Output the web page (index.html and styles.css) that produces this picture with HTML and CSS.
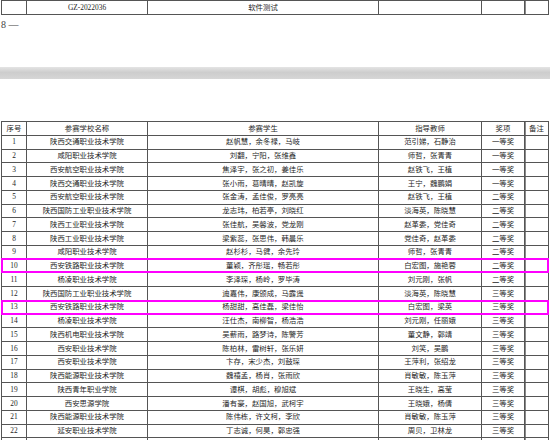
FILE: index.html
```html
<!DOCTYPE html>
<html lang="zh-CN">
<head>
<meta charset="utf-8">
<title>获奖名单</title>
<link rel="stylesheet" href="styles.css">
</head>
<body>
<div class="page page-top">
  <div class="tbl tbl-head">
    <span></span><span>GZ-2022036</span><span>软件测试</span><span></span><span></span><span></span>
  </div>
  <div class="pageno">8 —</div>
</div>
<div class="gap"></div>
<div class="page page-main">
  <div class="wrap">
    <div class="tbl">
      <span>序号</span><span>参赛学校名称</span><span>参赛学生</span><span>指导教师</span><span>奖项</span><span>备注</span>
      <span>1</span><span>陕西交通职业技术学院</span><span>赵帆慧，余冬禄，马岐</span><span>范引娣，石静治</span><span>一等奖</span><span></span>
      <span>2</span><span>咸阳职业技术学院</span><span>刘翻，宁阳，张维鑫</span><span>师哲，张青青</span><span>一等奖</span><span></span>
      <span>3</span><span>西安航空职业技术学院</span><span>焦泽宇，张之初，姜佳乐</span><span>赵铁飞，王植</span><span>一等奖</span><span></span>
      <span>4</span><span>陕西交通职业技术学院</span><span>张小雨，葛晴晴，赵凯旋</span><span>王宁，魏鹏娟</span><span>一等奖</span><span></span>
      <span>5</span><span>西安航空职业技术学院</span><span>张金涛，孟佳俊，罗亮亮</span><span>赵铁飞，王植</span><span>二等奖</span><span></span>
      <span>6</span><span>陕西国防工业职业技术学院</span><span>龙志玮，柏若亭，刘晓红</span><span>淡海英，陈晓慧</span><span>二等奖</span><span></span>
      <span>7</span><span>陕西工业职业技术学院</span><span>张佳航，吴馨波，党龙刚</span><span>赵革委，党佳奇</span><span>二等奖</span><span></span>
      <span>8</span><span>陕西工业职业技术学院</span><span>梁紫蕊，张思伟，韩晨乐</span><span>党佳奇，赵革委</span><span>二等奖</span><span></span>
      <span>9</span><span>咸阳职业技术学院</span><span>赵杉杉，马健，余先玲</span><span>师哲，张青青</span><span>二等奖</span><span></span>
      <span>10</span><span>西安铁路职业技术学院</span><span>董颖，齐彤瑶，畅若彤</span><span>白宏图，施艳蓉</span><span>二等奖</span><span></span>
      <span>11</span><span>杨凌职业技术学院</span><span>李泽琛，杨岭，罗毕涛</span><span>刘元刚，张帆</span><span>二等奖</span><span></span>
      <span>12</span><span>陕西国防工业职业技术学院</span><span>迪嘉伟，康颁成，马露遥</span><span>淡海英，陈晓慧</span><span>三等奖</span><span></span>
      <span>13</span><span>西安铁路职业技术学院</span><span>杨甜甜，高佳磊，梁佳怡</span><span>白宏图，梁英</span><span>三等奖</span><span></span>
      <span>14</span><span>杨凌职业技术学院</span><span>汪仕杰，南柳智，杨浩浩</span><span>刘元刚，任丽娥</span><span>三等奖</span><span></span>
      <span>15</span><span>陕西机电职业技术学院</span><span>吴薪雨，路梦诗，陈警芳</span><span>董文静，郭靖</span><span>三等奖</span><span></span>
      <span>16</span><span>西安职业技术学院</span><span>陈柏林，雷树轩，张乐妍</span><span>刘笑，吴鹏</span><span>三等奖</span><span></span>
      <span>17</span><span>西安职业技术学院</span><span>卞存，宋少杰，刘鼓琛</span><span>王萍利，张绍龙</span><span>三等奖</span><span></span>
      <span>18</span><span>陕西能源职业技术学院</span><span>魏禧孟，杨肖，张雨欣</span><span>肖敏敏，陈玉萍</span><span>三等奖</span><span></span>
      <span>19</span><span>陕西青年职业学院</span><span>谭棋，胡彪，穆旭斌</span><span>王晓生，高莹</span><span>三等奖</span><span></span>
      <span>20</span><span>西安思源学院</span><span>潘有豪，赵国旭，武柯宇</span><span>王晓娥，杨倩</span><span>三等奖</span><span></span>
      <span>21</span><span>陕西能源职业技术学院</span><span>陈伟栋，许文柯，李欣</span><span>肖敏敏，陈玉萍</span><span>三等奖</span><span></span>
      <span>22</span><span>延安职业技术学院</span><span>丁志诚，何昊，郭忠强</span><span>周贝，卫林龙</span><span>三等奖</span><span></span>
      <span></span><span></span><span></span><span></span><span></span><span></span>
    </div>
    <div class="mark mark-10"></div>
    <div class="mark mark-13"></div>
  </div>
</div>
</body>
</html>
```

FILE: styles.css
```css
html, body {
  margin: 0;
  padding: 0;
  background: #fff;
  overflow: hidden;
}

body {
  font-family: "Liberation Serif", "Noto Sans CJK SC", serif;
  color: #333;
  width: 550px;
  height: 440px;
}

.page {
  background: #fff;
}

.page-top {
  height: 67px;
}

.gap {
  height: 12px;
  background: linear-gradient(#e4e4e4, #cdcdcd 45%, #d6d6d6);
}

.page-main {
  padding-top: 42px;
}

.wrap {
  position: relative;
  width: max-content;
}

.tbl {
  display: grid;
  grid-template-columns: 24px 120px 230px 102px 42px 23px;
  grid-auto-rows: 12.75px;
  gap: 1px;
  padding: 1px;
  margin-left: 1px;
  background: #555;
  width: max-content;
}

.tbl-head {
  grid-auto-rows: 13px;
}

.tbl > span {
  background: #fff;
  display: flex;
  align-items: center;
  justify-content: center;
  font-size: 7.4px;
  line-height: 1;
  white-space: nowrap;
  color: #262626;
}

.tbl > span:nth-child(6n) {
  box-shadow: inset 1px 0 0 #8a8a8a;
}

.pageno {
  height: 20px;
  line-height: 20px;
  font-size: 10px;
  padding-left: 1px;
  color: #444;
}

.mark {
  position: absolute;
  z-index: 2;
  left: 1px;
  width: 544px;
  border: 2px solid #f0f;
}

.mark-10 {
  top: 137px;
  height: 11px;
}

.mark-13 {
  top: 179px;
  height: 10.5px;
}
```
